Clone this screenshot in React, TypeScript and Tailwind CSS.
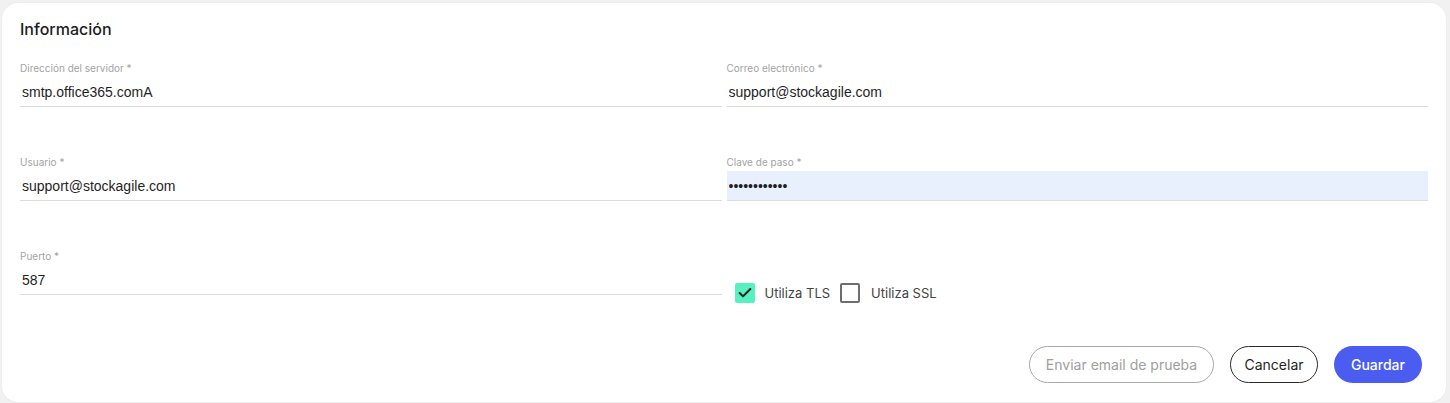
import { Check } from "lucide-react";

const ui = { fontFamily: "Inter, 'Noto Sans', sans-serif" };
const arial = { fontFamily: "'Liberation Sans', Arial, sans-serif" };

type FieldProps = {
  label: string;
  value: string;
  type?: string;
  autofill?: boolean;
};

function Field({ label, value, type = "text", autofill }: FieldProps) {
  return (
    <div className="flex flex-col">
      <label className="h-[12px] text-[10px] leading-[12px] text-[#a3a3a3]" style={ui}>
        {label}
      </label>
      <input
        type={type}
        defaultValue={value}
        readOnly
        className={`mt-[3px] h-[30px] w-full border-b border-[#dcdcdc] px-[2px] text-[14px] text-[#1f1f1f] outline-none ${
          autofill ? "bg-[#e8f0fe]" : "bg-white"
        }`}
        style={arial}
      />
    </div>
  );
}

export default function App() {
  return (
    <div className="min-h-[403px] bg-[#f1f1f1] pl-[2px] pr-[4px] pt-[3px]">
      <div className="h-[399px] rounded-[16px] bg-white px-[18px] pt-[15px] shadow-[0_0_2px_rgba(0,0,0,0.06)]">
        {/* titulo */}
        <h2 className="text-[16px] font-medium leading-[22px] text-[#1c1c1c]" style={ui}>
          Información
        </h2>

        {/* campos */}
        <div className="mt-[22px] grid grid-cols-2 gap-x-[5px] gap-y-[49px]">
          <Field label="Dirección del servidor *" value="smtp.office365.comA" />
          <Field label="Correo electrónico *" value="support@stockagile.com" />
          <Field label="Usuario *" value="support@stockagile.com" />
          <Field label="Clave de paso *" value="passwordpass" type="password" autofill />
          <Field label="Puerto *" value="587" />

          <div className="flex items-start pl-[8px] pt-[33px]" style={ui}>
            <span className="flex h-[20px] w-[20px] items-center justify-center rounded-[2px] bg-[#56f1bf]">
              <Check className="h-[16px] w-[16px] text-[#1b1b1b]" strokeWidth={3} />
            </span>
            <span className="ml-[10px] text-[13px] leading-[20px] text-[#444]">Utiliza TLS</span>
            <span className="ml-[10px] h-[20px] w-[20px] rounded-[2px] border-2 border-[#6e6e6e]" />
            <span className="ml-[11px] text-[13px] leading-[20px] text-[#444]">Utiliza SSL</span>
          </div>
        </div>

        {/* acciones */}
        <div className="mt-[43px] flex justify-end gap-[16px] pr-[6px]" style={ui}>
          <button className="h-[37px] w-[185px] rounded-full border border-[#a8a8a8] text-[14px] text-[#a0a0a0]">
            Enviar email de prueba
          </button>
          <button className="h-[37px] w-[88px] rounded-full border border-[#2a2a2a] text-[14px] text-[#1f1f1f]">
            Cancelar
          </button>
          <button className="h-[37px] w-[88px] rounded-full bg-[#4a5df0] text-[14px] font-medium text-white">
            Guardar
          </button>
        </div>
      </div>
    </div>
  );
}
